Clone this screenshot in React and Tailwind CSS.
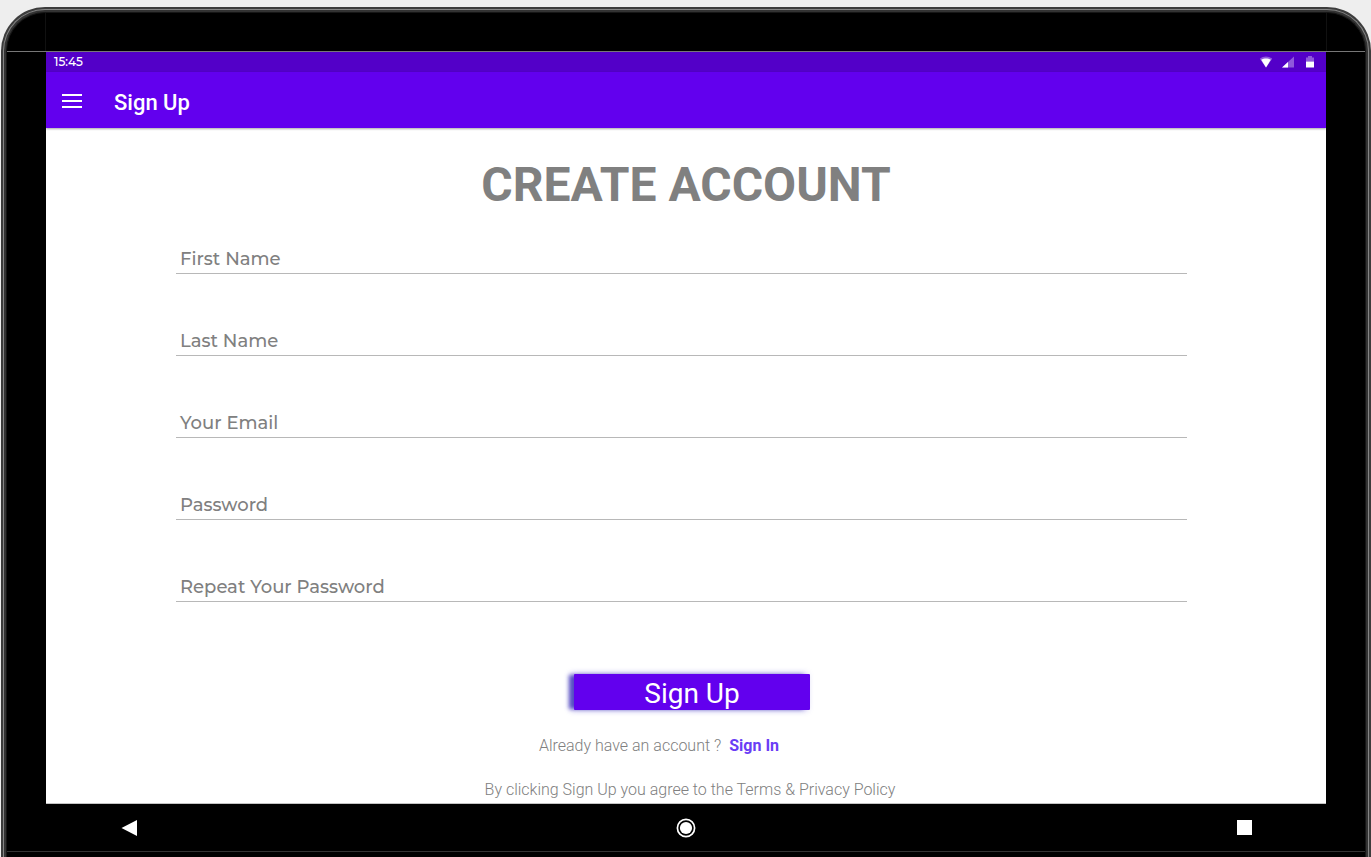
const fields = [
  { id: "first-name", label: "First Name", type: "text" },
  { id: "last-name", label: "Last Name", type: "text" },
  { id: "email", label: "Your Email", type: "email" },
  { id: "password", label: "Password", type: "password" },
  { id: "repeat-password", label: "Repeat Your Password", type: "password" },
];

function StatusBar() {
  return (
    <div className="flex h-5 items-center justify-between bg-[#5300c8] pr-[9px] pl-2 text-white">
      <span className="font-['Montserrat','Inter',sans-serif] text-xs font-medium">15:45</span>
      <div className="flex items-center gap-2">
        <svg width="14" height="12" viewBox="0 0 14 12" aria-label="Wi-Fi">
          <path d="M7 11.5 L0.8 2.7 C4.5 -0.3 9.5 -0.3 13.2 2.7 Z" fill="#fff" fillOpacity="0.35" />
          <path d="M7 11.5 L2.2 3.8 C5 1.9 9 1.9 11.8 3.8 Z" fill="#fff" />
        </svg>
        <svg width="14" height="12" viewBox="0 0 14 12" aria-label="Mobile signal">
          <path d="M1 11.5 L13 0.5 V11.5 Z" fill="#fff" fillOpacity="0.35" />
          <path d="M1 11.5 L7 6 V11.5 Z" fill="#fff" />
        </svg>
        <svg width="14" height="12" viewBox="0 0 14 12" aria-label="Battery">
          <path d="M3 5.5 V1.5 H5 V0 H9 V1.5 H11 V5.5 Z" fill="#fff" fillOpacity="0.35" />
          <path d="M3 5.5 H11 V11.5 H3 Z" fill="#fff" />
        </svg>
      </div>
    </div>
  );
}

function AppBar() {
  return (
    <header className="relative flex h-14 items-center gap-8 bg-[#6200ee] px-4 text-white shadow-[0_1px_2px_rgba(0,0,0,0.35)]">
      <button type="button" aria-label="Open menu" className="pt-0.5">
        <svg width="20" height="14" viewBox="0 0 20 14" fill="#fff">
          <rect x="0" y="0" width="20" height="2" />
          <rect x="0" y="6" width="20" height="2" />
          <rect x="0" y="12" width="20" height="2" />
        </svg>
      </button>
      <span className="pt-1.5 text-[22px] leading-7 font-medium">Sign Up</span>
    </header>
  );
}

function SignUpForm() {
  return (
    <main className="flex-1 bg-white pt-7 text-[#808080]">
      <h1 className="pt-px text-center text-5xl leading-[56px] font-bold">CREATE ACCOUNT</h1>
      <form onSubmit={(e) => e.preventDefault()}>
        <div className="flex flex-col gap-[50px] pt-[29px] pr-[139px] pl-[130px] font-['Montserrat','Inter',sans-serif] text-lg leading-8 font-medium">
          {fields.map((f) => (
            <div key={f.id} className="grid">
              <input
                id={f.id}
                type={f.type}
                placeholder=" "
                className="peer col-start-1 row-start-1 h-8 w-full border-b border-[#b8b8b8] px-1 outline-none"
              />
              <label
                htmlFor={f.id}
                className="invisible pointer-events-none col-start-1 row-start-1 justify-self-start px-1 pt-0.5 leading-[30px] peer-placeholder-shown:visible"
              >
                {f.label}
              </label>
            </div>
          ))}
        </div>
        <div className="flex justify-center pt-[72px] pl-3">
          <button
            type="submit"
            className="h-9 w-[236px] rounded-[1px] bg-[#6200ee] pt-1 text-[28px] leading-8 text-white shadow-[-6px_0_4px_-1px_rgba(50,40,180,0.75),-3px_0_6px_rgba(60,40,200,0.4)]"
          >
            Sign Up
          </button>
        </div>
      </form>
      <p className="flex justify-center gap-2 pt-6 pr-[54px] text-base font-light">
        <span>Already have an account ?</span>
        <a href="#sign-in" className="font-bold text-[#6a3df5]">Sign In</a>
      </p>
      <p className="pt-5 pl-2 text-center text-base font-light">
        By clicking Sign Up you agree to the Terms &amp; Privacy Policy
      </p>
    </main>
  );
}

function NavigationBar() {
  return (
    <nav className="grid h-12 grid-cols-3 items-center border-t border-[#c4c4c4] bg-black px-[74px]">
      <button type="button" aria-label="Back" className="justify-self-start">
        <svg width="17" height="16" viewBox="0 0 17 16"><path d="M1.5 8 L17 0 V16 Z" fill="#fff" /></svg>
      </button>
      <button type="button" aria-label="Home" className="justify-self-center">
        <svg width="20" height="20" viewBox="0 0 20 20">
          <circle cx="10" cy="10" r="8.6" fill="none" stroke="#fff" strokeWidth="1.7" />
          <circle cx="10" cy="10" r="6.1" fill="#fff" />
        </svg>
      </button>
      <button type="button" aria-label="Recent apps" className="justify-self-end">
        <svg width="15" height="15" viewBox="0 0 15 15"><rect width="15" height="15" fill="#fff" /></svg>
      </button>
    </nav>
  );
}

export default function App() {
  return (
    <div className="flex min-h-screen flex-col bg-[#eeeeee] pt-[7px] pl-px font-['Roboto',sans-serif]">
      <div className="flex flex-1 flex-col rounded-t-[44px] border-x-2 border-t-2 border-[#3c3c3c] bg-[#3c3c3c]">
        <div className="flex flex-1 flex-col rounded-t-[42px] border-x border-t border-[#858585] bg-[#858585]">
          <div className="flex flex-1 flex-col rounded-t-[41px] border-x-2 border-t-2 border-[#333333] bg-[#333333]">
            <div className="flex flex-1 flex-col rounded-t-[39px] border-x border-t border-[#161616] bg-black">
              <div className="h-[38px] shrink-0 px-[38px]">
                <div className="h-full border-x border-[#111111]" />
              </div>
              <div className="h-px bg-[#777777]" />
              <div className="mx-[39px] flex flex-1 flex-col">
                <StatusBar />
                <AppBar />
                <SignUpForm />
                <NavigationBar />
              </div>
              <div className="h-px bg-[#333333]" />
              <div className="h-[5px]" />
            </div>
          </div>
        </div>
      </div>
    </div>
  );
}
